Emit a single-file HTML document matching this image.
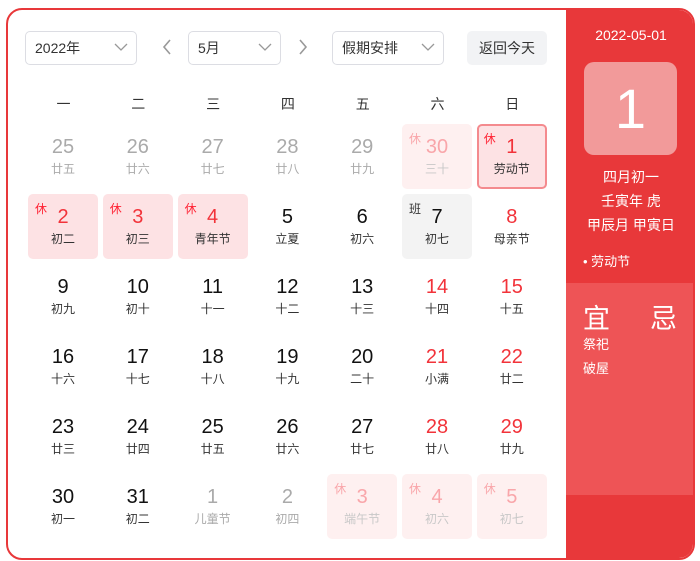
<!DOCTYPE html>
<html><head><meta charset="utf-8"><style>
*{box-sizing:border-box;margin:0;padding:0}
body{width:700px;height:561px;background:#fff;font-family:"Liberation Sans","Noto Sans CJK SC",sans-serif;position:relative;overflow:hidden}
.wrap{position:absolute;left:6px;top:8px;width:689px;height:552px;border:2px solid #e8383a;border-radius:16px;overflow:hidden;background:#fff}
.side{position:absolute;left:558px;top:0;width:130px;height:100%;background:#e8383a;color:#fff;text-align:center}
.sel{position:absolute;top:21px;height:34px;border:1px solid #dcdde3;border-radius:5px;font-size:14px;color:#333;line-height:32px;padding-left:9px}
.sel svg{position:absolute;right:8px;top:11px}
.arr{position:absolute;top:28px}
.btn{position:absolute;left:459px;top:21px;width:80px;height:34px;background:#f2f3f5;border-radius:5px;font-size:14px;color:#333;text-align:center;line-height:34px}
.wd{position:absolute;top:84px;width:75px;text-align:center;font-size:14px;color:#333}
.c{position:absolute;width:70px;height:65px;border-radius:5px;text-align:center}
.c .n{position:absolute;left:0;right:0;top:12px;font-size:20px;line-height:22px;color:#111}
.c .l{position:absolute;left:0;right:0;top:37px;font-size:12px;line-height:16px;color:#333}
.c .t{position:absolute;left:7px;top:6px;font-size:12px;color:#f23}
.g .n,.g .l{color:#aaa}
.r .n{color:#f2333a}
.h{background:#fde2e4}
.h .n{color:#f2333a}
</style></head><body>
<div class="wrap">
<div class="sel" style="left:17px;width:112px">2022年<svg width="14" height="9"><path d="M1 1l6 6 6-6" stroke="#999" fill="none" stroke-width="1.3"/></svg></div>
<svg class="arr" style="left:153px" width="12" height="18"><path d="M9 2L3 9l6 7" stroke="#999" fill="none" stroke-width="1.6"/></svg>
<div class="sel" style="left:180px;width:93px">5月<svg width="14" height="9"><path d="M1 1l6 6 6-6" stroke="#999" fill="none" stroke-width="1.3"/></svg></div>
<svg class="arr" style="left:289px" width="12" height="18"><path d="M3 2l6 7-6 7" stroke="#999" fill="none" stroke-width="1.6"/></svg>
<div class="sel" style="left:324px;width:112px">假期安排<svg width="14" height="9"><path d="M1 1l6 6 6-6" stroke="#999" fill="none" stroke-width="1.3"/></svg></div>
<div class="btn">返回今天</div>
<div id="g"></div>
<div class="side">
<div style="position:absolute;top:17px;width:100%;font-size:14px">2022-05-01</div>
<div style="position:absolute;left:18px;top:52px;width:93px;height:93px;background:#f29a9a;border-radius:10px;font-size:56px;line-height:93px">1</div>
<div style="position:absolute;top:155px;width:100%;font-size:14px;line-height:24px">四月初一<br>壬寅年 虎<br>甲辰月 甲寅日</div>
<div style="position:absolute;left:17px;top:241px;font-size:13px">• 劳动节</div>
<div style="position:absolute;left:0;top:273px;width:100%;height:212px;background:#ee5456;text-align:left">
<div style="position:absolute;left:17px;top:14px;font-size:27px">宜</div>
<div style="position:absolute;left:84px;top:14px;font-size:27px">忌</div>
<div style="position:absolute;left:17px;top:50px;font-size:13px;line-height:24px">祭祀<br>破屋</div>
</div></div>
</div>
<script>
var W=['一','二','三','四','五','六','日'],h='';
for(var i=0;i<7;i++)h+='<div class="wd" style="left:'+(18+i*74.8)+'px">'+W[i]+'</div>';
var D=[
[['25','廿五','g'],['26','廿六','g'],['27','廿七','g'],['28','廿八','g'],['29','廿九','g'],['30','三十','g h f','休'],['1','劳动节','h','休','b']],
[['2','初二','h','休'],['3','初三','h','休'],['4','青年节','h','休'],['5','立夏'],['6','初六'],['7','初七','w','班'],['8','母亲节','r']],
[['9','初九'],['10','初十'],['11','十一'],['12','十二'],['13','十三'],['14','十四','r'],['15','十五','r']],
[['16','十六'],['17','十七'],['18','十八'],['19','十九'],['20','二十'],['21','小满','r'],['22','廿二','r']],
[['23','廿三'],['24','廿四'],['25','廿五'],['26','廿六'],['27','廿七'],['28','廿八','r'],['29','廿九','r']],
[['30','初一'],['31','初二'],['1','儿童节','g'],['2','初四','g'],['3','端午节','h f','休'],['4','初六','h f','休'],['5','初七','h f','休']]];
for(var r=0;r<6;r++)for(var c=0;c<7;c++){var d=D[r][c],cls=d[2]||'',st='left:'+(20+c*74.8)+'px;top:'+(114+r*70)+'px;';
var f=cls.indexOf('f')>=0;
if(cls=='w')st+='background:#f3f3f3;';if(d[4])st+='border:2px solid #f48a8e;';if(f)st+='background:#fef0f0;';
h+='<div class="c '+cls.replace(' f','')+'" style="'+st+'">'+(d[3]?'<span class="t" style="'+(cls=='w'?'color:#333;':'')+(f?'color:#f9a6aa;':'')+(d[4]?'left:5px;top:4px':'')+'">'+d[3]+'</span>':'')+'<div class="n" style="'+(f?'color:#f9a6aa;':'')+(d[4]?'top:10px':'')+'">'+d[0]+'</div><div class="l" style="'+(f?'color:#c8c8c8;':'')+(d[4]?'top:35px':'')+'">'+d[1]+'</div></div>';}
document.getElementById('g').innerHTML=h;
</script>
</body></html>
